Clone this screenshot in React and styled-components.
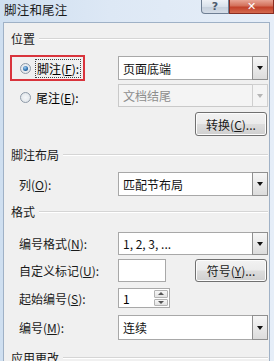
import React from 'react';
import styled, { createGlobalStyle } from 'styled-components';

const GlobalStyle = createGlobalStyle`
  html, body {
    margin: 0;
    padding: 0;
    background: #ffffff;
  }
  body {
    font-family: "Noto Sans CJK SC", "Noto Sans", sans-serif;
    font-size: 12px;
    color: #000;
  }
`;

const Window = styled.div`
  width: 274px;
  height: 361px;
  overflow: hidden;
  display: flex;
  flex-direction: column;
  background: linear-gradient(90deg, #cfdff0 0%, #dde8f5 40%, #e6eef8 100%);
`;

const TitleBar = styled.div`
  height: 22px;
  flex: none;
  display: flex;
  justify-content: space-between;
  align-items: flex-start;
  padding-left: 4px;
`;

const Title = styled.div`
  font-size: 12.5px;
  line-height: 18px;
  color: #1a1a1a;
  padding-top: 1px;
  letter-spacing: 0.2px;
`;

const Caption = styled.div`
  display: flex;
  align-items: flex-start;
`;

const CaptionButton = styled.div`
  height: 14px;
  display: flex;
  align-items: center;
  justify-content: center;
  box-sizing: border-box;
  border: 1px solid ${p => (p.close ? '#8a2d21' : '#6f7f94')};
  border-top: none;
  width: ${p => (p.close ? '45px' : '28px')};
  border-radius: ${p => (p.close ? '0 0 0 0' : '0 0 0 4px')};
  background: ${p => (p.close
    ? 'linear-gradient(#e8a595 0%, #d3705a 45%, #c2412a 55%, #d46a50 100%)'
    : 'linear-gradient(#eef2f7 0%, #d9e1eb 50%, #c6d0dc 55%, #d5dde8 100%)')};
  color: ${p => (p.close ? '#ffffff' : '#4d5b6e')};
  font-family: "DejaVu Sans", sans-serif;
  font-weight: bold;
  font-size: 11px;
  line-height: 1;
`;

const Body = styled.div`
  flex: 1;
  margin: 0 4px 0 3px;
  border: 1px solid #9fb1c6;
  border-bottom: none;
  background: #f0f0f0;
  padding: 8px 1px 0 7px;
`;

const Header = styled.div`
  display: flex;
  align-items: center;
  gap: 4px;
  height: 16px;
  line-height: 16px;
  margin-top: ${p => p.mt || 0}px;
  color: #1a1a1a;
  &::after {
    content: '';
    flex: 1;
    height: 0;
    border-top: 1px solid #d5d5d5;
    border-bottom: 1px solid #ffffff;
  }
`;

const Row = styled.div`
  display: grid;
  grid-template-columns: 107px 1fr;
  align-items: center;
  margin-top: ${p => p.mt || 0}px;
  height: ${p => p.h || 24}px;
`;

const Label = styled.div`
  padding-left: 8px;
  color: ${p => (p.dim ? '#6d6d6d' : '#1a1a1a')};
  white-space: nowrap;
  u {
    text-decoration: underline;
    text-underline-offset: 1px;
  }
`;

const RedBox = styled.div`
  display: inline-flex;
  align-items: center;
  box-sizing: border-box;
  height: 26px;
  margin-left: -1px;
  padding: 0 3px 0 8px;
  border: 2px solid #d9343c;
`;

const RadioRow = styled.div`
  display: inline-flex;
  align-items: center;
  gap: 5px;
  padding-left: ${p => p.pl || 0}px;
`;

const RadioDot = styled.span`
  width: 11px;
  height: 11px;
  border-radius: 50%;
  box-sizing: border-box;
  border: 1px solid #8e9aa8;
  background: radial-gradient(circle, #f4f6f8 0%, #dde2e7 100%);
  display: inline-flex;
  align-items: center;
  justify-content: center;
  &::after {
    content: '';
    width: 5px;
    height: 5px;
    border-radius: 50%;
    background: ${p => (p.checked ? 'radial-gradient(circle at 40% 35%, #9ed0f5 0%, #2a6aa8 60%, #1a3f6e 100%)' : 'transparent')};
  }
`;

const FocusText = styled.span`
  outline: 1px dotted #444;
  outline-offset: 0px;
  padding: 0 1px;
`;

const Combo = styled.div`
  display: flex;
  height: ${p => p.h || 24}px;
  box-sizing: border-box;
  border: 1px solid ${p => (p.disabled ? '#c9c9c9' : '#a8a8a8')};
  background: ${p => (p.disabled ? '#f4f4f4' : '#ffffff')};
  color: ${p => (p.disabled ? '#8d8d8d' : '#111')};
`;

const ComboText = styled.div`
  flex: 1;
  display: flex;
  align-items: center;
  padding-left: 4px;
`;

const ComboButton = styled.div`
  width: 16px;
  margin: -1px -1px -1px 0;
  box-sizing: border-box;
  border: 1px solid ${p => (p.disabled ? '#cfcfcf' : '#8f8f8f')};
  background: ${p => (p.disabled ? '#f4f4f4' : 'linear-gradient(#f6f6f6, #dcdcdc)')};
  display: flex;
  align-items: center;
  justify-content: center;
  &::after {
    content: '';
    border-left: 3.5px solid transparent;
    border-right: 3.5px solid transparent;
    border-top: 4px solid ${p => (p.disabled ? '#b5b5b5' : '#111')};
  }
`;

const Right = styled.div`
  display: flex;
  justify-content: flex-end;
  margin-top: ${p => p.mt || 0}px;
  padding-right: 1px;
`;

const Button = styled.div`
  width: 72px;
  height: ${p => p.h || 24}px;
  box-sizing: border-box;
  border: 1px solid #707070;
  border-radius: 3px;
  background: linear-gradient(#f2f2f2 0%, #ebebeb 48%, #dddddd 52%, #cfcfcf 100%);
  box-shadow: inset 0 0 0 1px #fcfcfc;
  display: flex;
  align-items: center;
  justify-content: center;
  color: #1a1a1a;
`;

const Controls = styled.div`
  display: flex;
  align-items: center;
  justify-content: space-between;
  padding-right: 1px;
`;

const TextBox = styled.div`
  width: 48px;
  height: 23px;
  box-sizing: border-box;
  border: 1px solid #a8a8a8;
  background: #fff;
`;

const Spin = styled.div`
  width: 52px;
  height: 20px;
  box-sizing: border-box;
  border: 1px solid #a8a8a8;
  background: #fff;
  display: flex;
`;

const SpinValue = styled.div`
  flex: 1;
  padding-left: 4px;
  display: flex;
  align-items: center;
`;

const SpinArrows = styled.div`
  width: 14px;
  display: flex;
  flex-direction: column;
  padding: 1px 1px 1px 0;
  gap: 1px;
`;

const SpinArrow = styled.div`
  flex: 1;
  border: 1px solid #b3b3b3;
  border-radius: 1px;
  background: linear-gradient(#f7f7f7, #e2e2e2);
  display: flex;
  align-items: center;
  justify-content: center;
  &::after {
    content: '';
    border-left: 3px solid transparent;
    border-right: 3px solid transparent;
    ${p => (p.up ? 'border-bottom: 3px solid #555;' : 'border-top: 3px solid #555;')}
  }
`;

function ComboBox({ value, disabled, h }) {
  return (
    <Combo disabled={disabled} h={h}>
      <ComboText>{value}</ComboText>
      <ComboButton disabled={disabled} />
    </Combo>
  );
}

export default function App() {
  return (
    <>
      <GlobalStyle />
      <Window>
        <TitleBar>
          <Title>脚注和尾注</Title>
          <Caption>
            <CaptionButton>?</CaptionButton>
            <CaptionButton close>✕</CaptionButton>
          </Caption>
        </TitleBar>
        <Body>
          <Header>位置</Header>
          <Row mt={8}>
            <div>
              <RedBox>
                <RadioRow>
                  <RadioDot checked />
                  <FocusText>脚注(<u>F</u>):</FocusText>
                </RadioRow>
              </RedBox>
            </div>
            <ComboBox value="页面底端" />
          </Row>
          <Row mt={5} h={23}>
            <div>
              <RadioRow pl={9}>
                <RadioDot />
                <span>尾注(<u>E</u>):</span>
              </RadioRow>
            </div>
            <ComboBox value="文档结尾" disabled h={23} />
          </Row>
          <Right mt={5}>
            <Button>转换(<u>C</u>)...</Button>
          </Right>
          <Header mt={11}>脚注布局</Header>
          <Row mt={9}>
            <Label>列(<u>O</u>):</Label>
            <ComboBox value="匹配节布局" />
          </Row>
          <Header mt={8}>格式</Header>
          <Row mt={12} h={23}>
            <Label>编号格式(<u>N</u>):</Label>
            <ComboBox value="1, 2, 3, ..." h={23} />
          </Row>
          <Row mt={4} h={23}>
            <Label>自定义标记(<u>U</u>):</Label>
            <Controls>
              <TextBox />
              <Button h={23}>符号(<u>Y</u>)...</Button>
            </Controls>
          </Row>
          <Row mt={6} h={20}>
            <Label>起始编号(<u>S</u>):</Label>
            <div>
              <Spin>
                <SpinValue>1</SpinValue>
                <SpinArrows>
                  <SpinArrow up />
                  <SpinArrow />
                </SpinArrows>
              </Spin>
            </div>
          </Row>
          <Row mt={7} h={25}>
            <Label>编号(<u>M</u>):</Label>
            <ComboBox value="连续" h={25} />
          </Row>
          <Header mt={10}>应用更改</Header>
        </Body>
      </Window>
    </>
  );
}
